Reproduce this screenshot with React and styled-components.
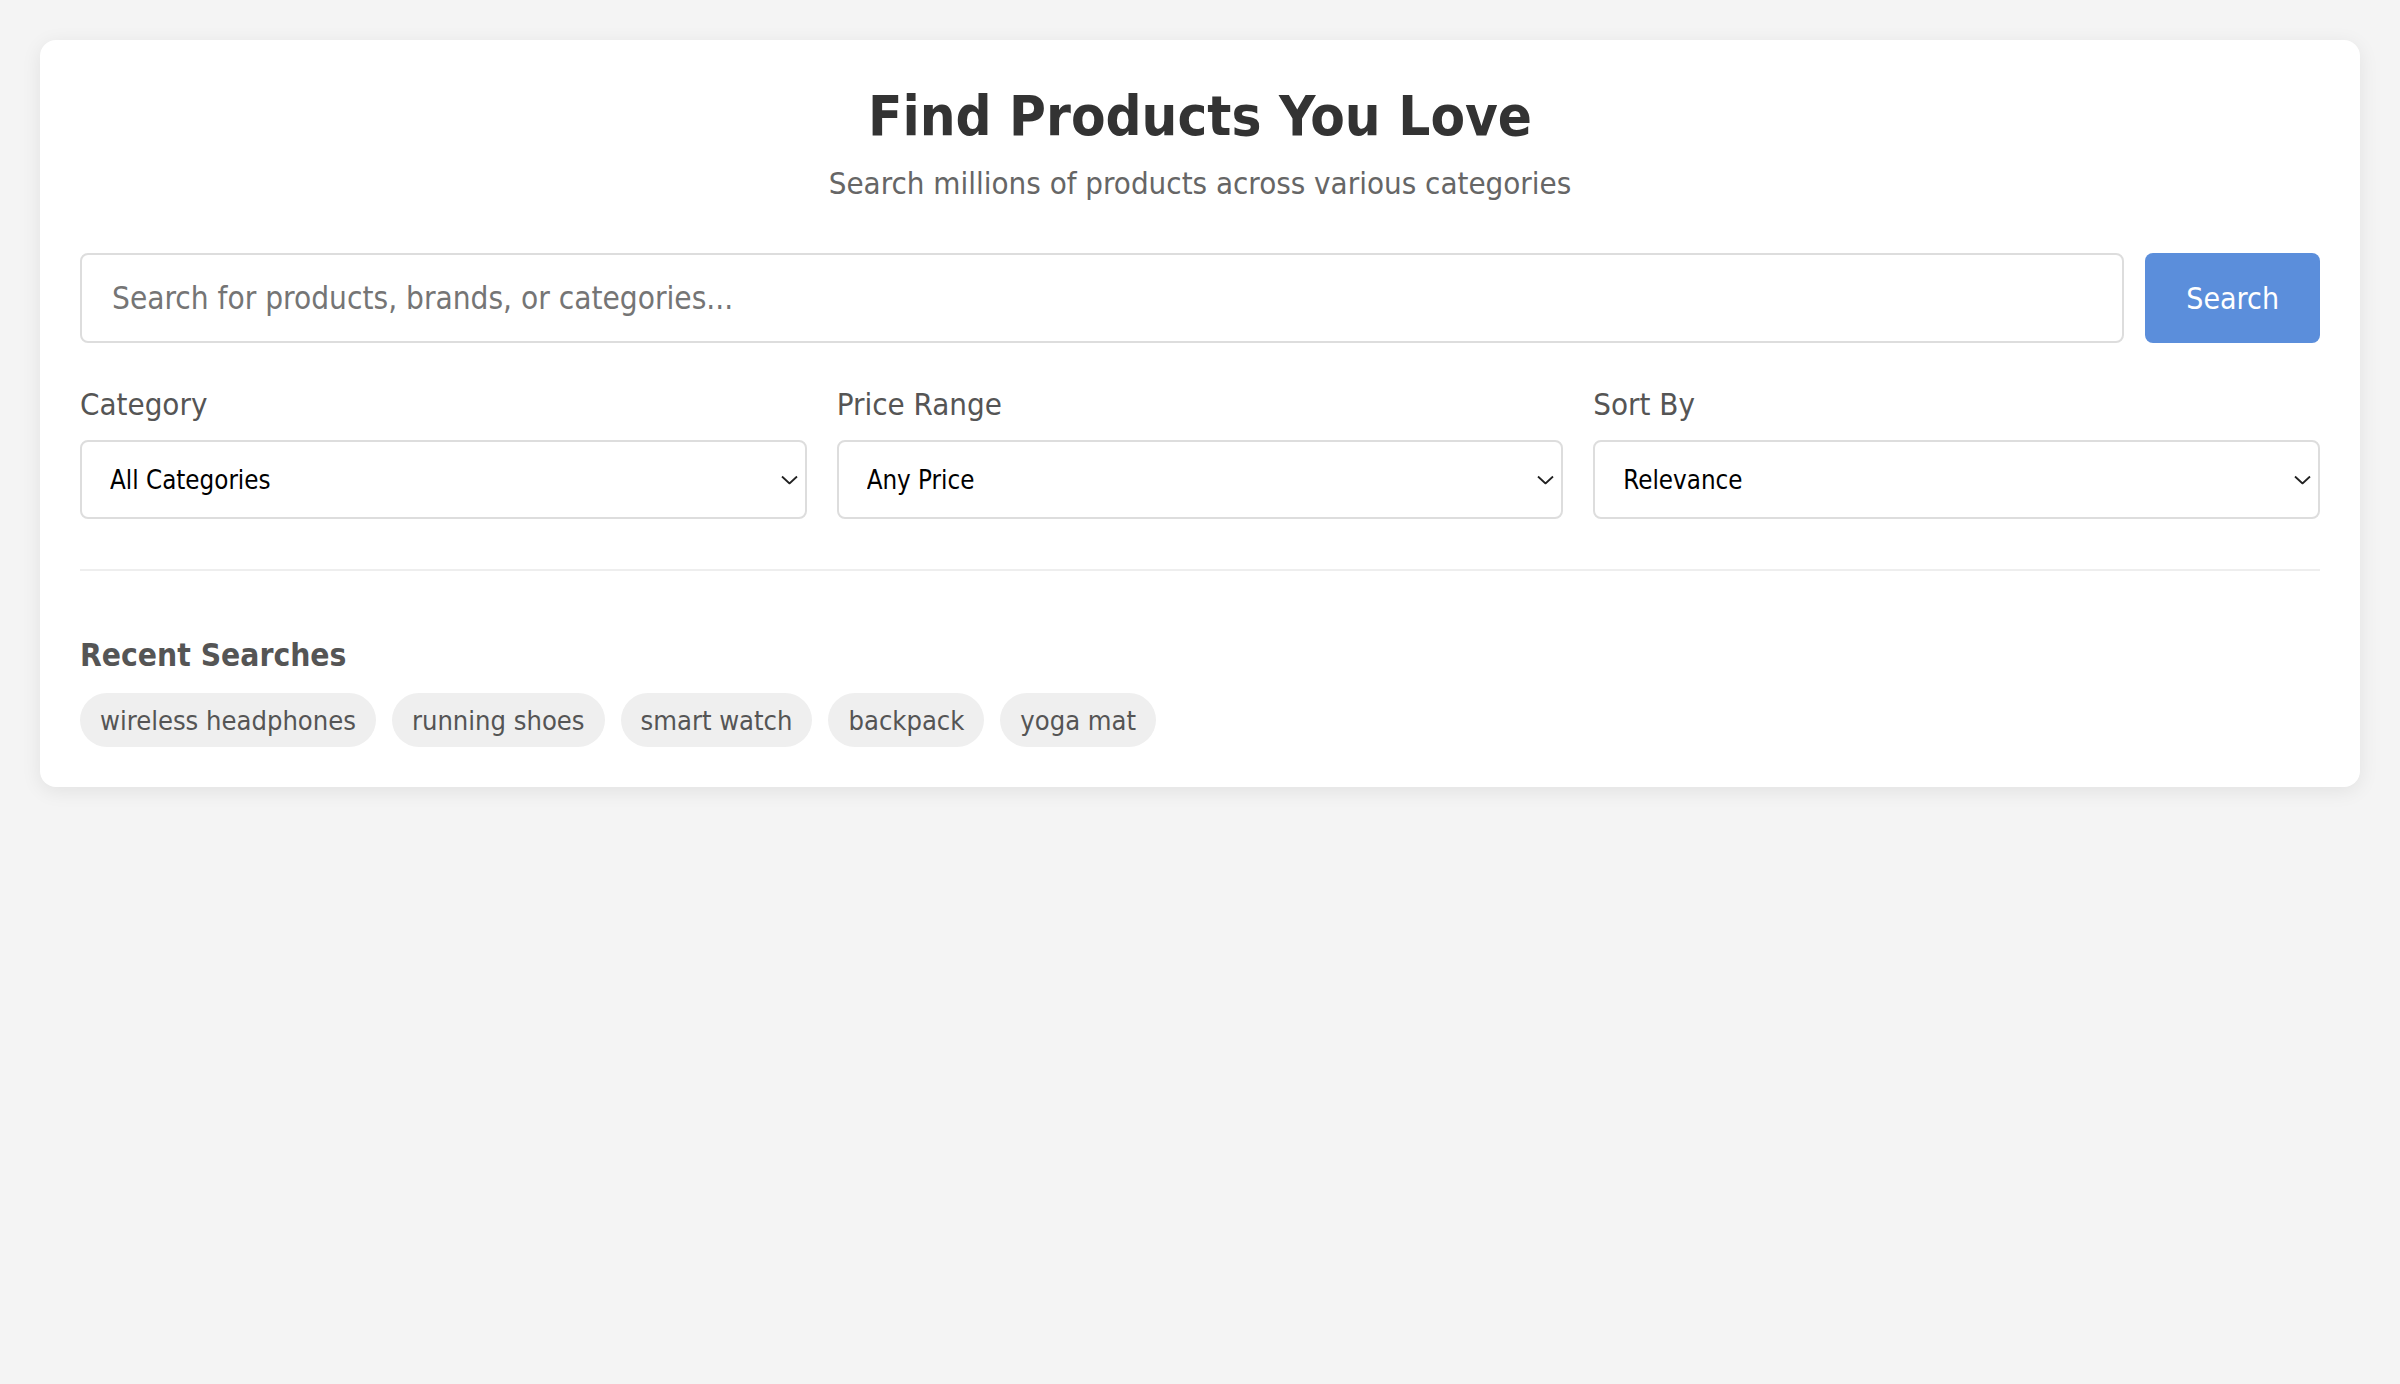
import React from 'react';
import styled, { createGlobalStyle } from 'styled-components';

const GlobalStyle = createGlobalStyle`
  body {
    margin: 0;
    background: #f4f4f4;
    font-family: "DejaVu Sans Condensed", "DejaVu Sans", Tahoma, sans-serif;
  }
`;

const Page = styled.div`
  padding: 40px;
  min-height: 1384px;
  box-sizing: border-box;
`;

const Card = styled.div`
  background: #fff;
  border-radius: 16px;
  box-shadow: 0 4px 20px rgba(0, 0, 0, 0.08);
  padding: 40px;
`;

const Header = styled.div`
  text-align: center;
`;

const Title = styled.h1`
  margin: 0;
  font-size: 56px;
  line-height: 72px;
  font-weight: 700;
  color: #333;
`;

const Subtitle = styled.p`
  margin: 13px 0 0;
  font-size: 31px;
  line-height: 36px;
  color: #666;
`;

const SearchRow = styled.div`
  display: flex;
  gap: 21px;
  margin-top: 52px;
  height: 90px;
`;

const SearchInput = styled.input`
  flex: 1;
  box-sizing: border-box;
  height: 90px;
  padding: 0 30px;
  border: 2px solid #ddd;
  border-radius: 8px;
  font-family: inherit;
  font-size: 31.3px;
  color: #333;
  outline: none;

  &::placeholder {
    color: #757575;
  }
`;

const SearchButton = styled.button`
  height: 90px;
  padding: 0 41px;
  border: none;
  border-radius: 8px;
  background: #5b8edb;
  color: #fff;
  font-family: inherit;
  font-size: 30px;
  cursor: pointer;
`;

const Filters = styled.div`
  display: grid;
  grid-template-columns: repeat(3, 1fr);
  gap: 30px;
  margin-top: 44px;
`;

const Field = styled.div`
  display: flex;
  flex-direction: column;
`;

const Label = styled.label`
  font-size: 31px;
  line-height: 35px;
  color: #555;
  margin-bottom: 18px;
`;

const SelectWrap = styled.div`
  position: relative;
`;

const Select = styled.select`
  width: 100%;
  height: 79px;
  box-sizing: border-box;
  appearance: none;
  padding: 0 40px 0 28px;
  border: 2px solid #ddd;
  border-radius: 8px;
  background: #fff;
  font-family: inherit;
  font-size: 25.7px;
  color: #000;
  outline: none;
`;

const Chevron = styled.svg`
  position: absolute;
  right: 9px;
  top: 50%;
  width: 17px;
  height: 9px;
  transform: translateY(-50%);
  pointer-events: none;
`;

const Divider = styled.hr`
  border: none;
  border-top: 2px solid #eee;
  margin: 50px 0 0;
`;

const RecentTitle = styled.h3`
  margin: 67px 0 0;
  font-size: 31.5px;
  line-height: 34px;
  font-weight: 700;
  color: #555;
`;

const Chips = styled.div`
  display: flex;
  flex-wrap: wrap;
  gap: 16px;
  margin-top: 21px;
`;

const Chip = styled.span`
  display: inline-flex;
  align-items: center;
  height: 54px;
  padding: 0 20px;
  border-radius: 27px;
  background: #efefef;
  color: #555;
  font-size: 27.1px;
  cursor: pointer;
`;

const filters = [
  { label: 'Category', value: 'All Categories' },
  { label: 'Price Range', value: 'Any Price' },
  { label: 'Sort By', value: 'Relevance' },
];

const recent = ['wireless headphones', 'running shoes', 'smart watch', 'backpack', 'yoga mat'];

const FilterSelect = ({ label, value }) => (
  <Field>
    <Label>{label}</Label>
    <SelectWrap>
      <Select defaultValue={value}>
        <option>{value}</option>
      </Select>
      <Chevron viewBox="0 0 17 9">
        <path d="M1 1l7.5 7 7.5-7" fill="none" stroke="#222" strokeWidth="1.8" />
      </Chevron>
    </SelectWrap>
  </Field>
);

const App = () => {
  return (
    <Page>
      <GlobalStyle />
      <Card>
        <Header>
          <Title>Find Products You Love</Title>
          <Subtitle>Search millions of products across various categories</Subtitle>
        </Header>

        <SearchRow>
          <SearchInput placeholder="Search for products, brands, or categories..." />
          <SearchButton>Search</SearchButton>
        </SearchRow>

        <Filters>
          {filters.map((f) => (
            <FilterSelect key={f.label} label={f.label} value={f.value} />
          ))}
        </Filters>

        <Divider />

        <RecentTitle>Recent Searches</RecentTitle>
        <Chips>
          {recent.map((r) => (
            <Chip key={r}>{r}</Chip>
          ))}
        </Chips>
      </Card>
    </Page>
  );
};

export default App;
